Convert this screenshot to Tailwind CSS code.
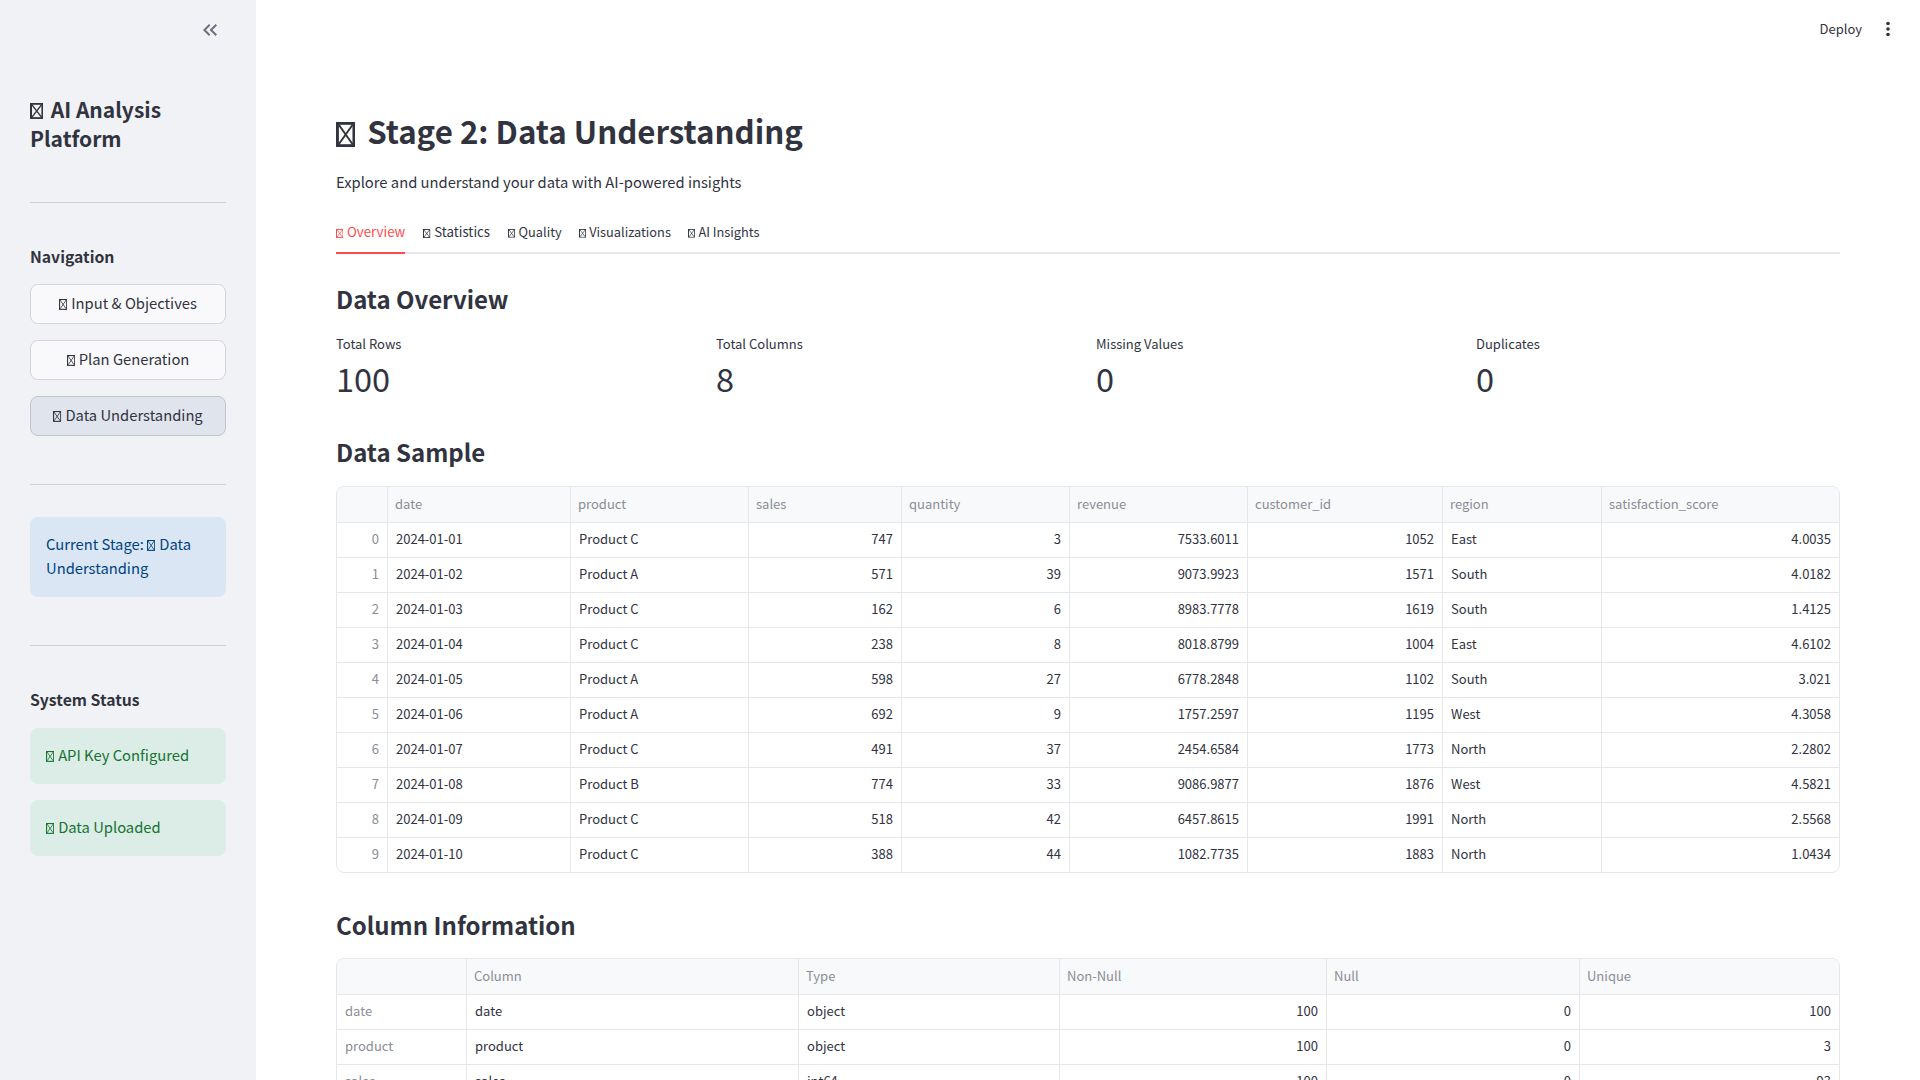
<!DOCTYPE html>
<html lang="en">
<head>
    <meta charset="UTF-8">
    <title>AI Analysis Platform</title>
    <script src="https://cdn.jsdelivr.net/npm/@tailwindcss/browser@4"></script>
</head>
<body class="h-screen overflow-hidden bg-white text-[#31333f] font-['Noto_Sans_CJK_SC','Noto_Sans',sans-serif]">

<!-- missing-glyph box, regular and bold -->
<svg class="absolute w-0 h-0">
    <symbol id="tofu" viewBox="0 0 6 8" preserveAspectRatio="none"><rect x=".4" y=".4" width="5.2" height="7.2" fill="none" stroke="currentColor" stroke-width=".8"/><path d="M.8 .8L5.2 7.2M5.2 .8L.8 7.2" fill="none" stroke="currentColor" stroke-width=".6"/></symbol>
    <symbol id="tofu-bold" viewBox="0 0 6 8" preserveAspectRatio="none"><rect x=".45" y=".45" width="5.1" height="7.1" fill="none" stroke="currentColor" stroke-width=".9"/><path d="M.8 .8L5.2 7.2M5.2 .8L.8 7.2" fill="none" stroke="currentColor" stroke-width=".6"/></symbol>
</svg>

<div class="flex h-screen">

    <!-- Sidebar -->
    <aside class="relative w-64 shrink-0 bg-[#f0f2f6] px-[30px] pt-[95px]">
        <svg class="absolute left-[198px] top-[18px]" width="24" height="24" viewBox="0 0 24 24" fill="#6b6f7c"><path d="M17.59 18L19 16.59 14.42 12 19 7.41 17.59 6l-6 6zM11 18l1.41-1.41L7.83 12l4.58-4.59L11 6l-6 6z"/></svg>
        <h2 class="text-[21px] leading-[29px] font-semibold"><svg class="inline-block w-[.64em] h-[.76em] align-[-.06em] mr-[.12em]"><use href="#tofu-bold"/></svg> AI Analysis Platform</h2>
        <hr class="mt-[49px] border-[#cfd1d6]">
        <h3 class="mt-[42px] text-[15.75px] font-semibold leading-6">Navigation</h3>
        <div class="mt-[15px] flex flex-col gap-4">
            <button class="h-10 pb-[2px] rounded-lg border border-[#d3d5db] bg-[#f9f9fb] text-[14.75px]"><svg class="inline-block w-[.56em] h-[.74em] align-[-.06em] mr-[.04em]"><use href="#tofu"/></svg> Input &amp; Objectives</button>
            <button class="h-10 pb-[2px] rounded-lg border border-[#d3d5db] bg-[#f9f9fb] text-[14.75px]"><svg class="inline-block w-[.56em] h-[.74em] align-[-.06em] mr-[.04em]"><use href="#tofu"/></svg> Plan Generation</button>
            <button class="h-10 pb-[2px] rounded-lg border border-[#c3c6ce] bg-[#e0e5ed] text-[14.75px]"><svg class="inline-block w-[.56em] h-[.74em] align-[-.06em] mr-[.04em]"><use href="#tofu"/></svg> Data Understanding</button>
        </div>
        <hr class="mt-[48px] border-[#cfd1d6]">
        <div class="mt-8 rounded-lg bg-[#dae6f3] px-4 pt-[15px] pb-[17px] text-[14.75px] leading-6 text-[#004280]">Current Stage: <svg class="inline-block w-[.56em] h-[.74em] align-[-.06em] mr-[.04em]"><use href="#tofu"/></svg> Data Understanding</div>
        <hr class="mt-[48px] border-[#cfd1d6]">
        <h3 class="mt-[42px] text-[15.75px] font-semibold leading-6">System Status</h3>
        <div class="mt-[16px] flex flex-col gap-4">
            <div class="h-14 pb-[2px] flex items-center rounded-lg bg-[#dbede6] px-4 text-[14.75px] text-[#177233]"><span><svg class="inline-block w-[.56em] h-[.74em] align-[-.06em] mr-[.04em]"><use href="#tofu"/></svg> API Key Configured</span></div>
            <div class="h-14 pb-[2px] flex items-center rounded-lg bg-[#dbede6] px-4 text-[14.75px] text-[#177233]"><span><svg class="inline-block w-[.56em] h-[.74em] align-[-.06em] mr-[.04em]"><use href="#tofu"/></svg> Data Uploaded</span></div>
        </div>
    </aside>

    <!-- Main -->
    <main class="relative flex-1 px-20 pt-[107px] overflow-hidden">
        <h1 class="text-[31.25px] leading-[48px] font-semibold"><svg class="inline-block w-[.62em] h-[.8em] align-[-.08em] mr-[.15em]"><use href="#tofu-bold"/></svg> Stage 2: Data Understanding</h1>
        <p class="mt-[15px] text-[14.75px] leading-6">Explore and understand your data with AI-powered insights</p>

        <div class="mt-[21px] flex gap-[17px] border-b-2 border-[#e6e7eb] text-[12.8px] h-[39px]">
            <span class="h-[39px] mr-px text-[13.3px] border-b-2 border-[#ff4b4b] text-[#ff4b4b] leading-[34px]"><svg class="inline-block w-[.56em] h-[.68em] align-[-.04em] mr-[.04em]"><use href="#tofu"/></svg> Overview</span>
            <span class="mr-px text-[13.3px] leading-[34px]"><svg class="inline-block w-[.56em] h-[.68em] align-[-.04em] mr-[.04em]"><use href="#tofu"/></svg> Statistics</span>
            <span class="leading-[34px]"><svg class="inline-block w-[.56em] h-[.68em] align-[-.04em] mr-[.04em]"><use href="#tofu"/></svg> Quality</span>
            <span class="leading-[34px]"><svg class="inline-block w-[.56em] h-[.68em] align-[-.04em] mr-[.04em]"><use href="#tofu"/></svg> Visualizations</span>
            <span class="leading-[34px]"><svg class="inline-block w-[.56em] h-[.68em] align-[-.04em] mr-[.04em]"><use href="#tofu"/></svg> AI Insights</span>
        </div>

        <h3 class="mt-[27px] text-[24px] leading-9 font-semibold">Data Overview</h3>
        <div class="mt-[17px] grid grid-cols-4 gap-4">
            <div><div class="text-[13px] leading-5">Total Rows</div><div class="text-[32.5px] leading-[48px]">100</div></div>
            <div><div class="text-[13px] leading-5">Total Columns</div><div class="text-[32.5px] leading-[48px]">8</div></div>
            <div><div class="text-[13px] leading-5">Missing Values</div><div class="text-[32.5px] leading-[48px]">0</div></div>
            <div><div class="text-[13px] leading-5">Duplicates</div><div class="text-[32.5px] leading-[48px]">0</div></div>
        </div>

        <h3 class="mt-[32px] text-[24px] leading-9 font-semibold">Data Sample</h3>
        <div id="sample" class="mt-[16px] rounded-lg border border-[#e6e7eb] overflow-hidden"></div>

        <h3 class="mt-[34px] text-[24px] leading-9 font-semibold">Column Information</h3>
        <div id="columns" class="mt-[15px] rounded-lg border border-[#e6e7eb] overflow-hidden"></div>
    </main>

    <!-- Toolbar -->
    <div class="absolute top-0 right-0 h-[58px] flex items-center text-[13px]">
        <span class="mr-[22px]">Deploy</span>
        <svg class="mr-[28px]" width="8" height="16" viewBox="0 0 8 16" fill="#31333f"><circle cx="4" cy="2.5" r="1.8"/><circle cx="4" cy="8" r="1.8"/><circle cx="4" cy="13.5" r="1.8"/></svg>
    </div>
</div>

<script>
    // rows: first cell is the grey index, the rest are data cells
    const sampleWidths = [51, 183, 178, 153, 168, 178, 195, 159, 237];
    const sampleAlign = ['r', 'l', 'l', 'r', 'r', 'r', 'r', 'l', 'r'];
    const sampleHead = ['', 'date', 'product', 'sales', 'quantity', 'revenue', 'customer_id', 'region', 'satisfaction_score'];
    const sampleRows = [
        ['0', '2024-01-01', 'Product C', '747', '3', '7533.6011', '1052', 'East', '4.0035'],
        ['1', '2024-01-02', 'Product A', '571', '39', '9073.9923', '1571', 'South', '4.0182'],
        ['2', '2024-01-03', 'Product C', '162', '6', '8983.7778', '1619', 'South', '1.4125'],
        ['3', '2024-01-04', 'Product C', '238', '8', '8018.8799', '1004', 'East', '4.6102'],
        ['4', '2024-01-05', 'Product A', '598', '27', '6778.2848', '1102', 'South', '3.021'],
        ['5', '2024-01-06', 'Product A', '692', '9', '1757.2597', '1195', 'West', '4.3058'],
        ['6', '2024-01-07', 'Product C', '491', '37', '2454.6584', '1773', 'North', '2.2802'],
        ['7', '2024-01-08', 'Product B', '774', '33', '9086.9877', '1876', 'West', '4.5821'],
        ['8', '2024-01-09', 'Product C', '518', '42', '6457.8615', '1991', 'North', '2.5568'],
        ['9', '2024-01-10', 'Product C', '388', '44', '1082.7735', '1883', 'North', '1.0434'],
    ];
    const columnWidths = [130, 332, 261, 267, 253, 259];
    const columnAlign = ['l', 'l', 'l', 'r', 'r', 'r'];
    const columnHead = ['', 'Column', 'Type', 'Non-Null', 'Null', 'Unique'];
    const columnRows = [
        ['date', 'date', 'object', '100', '0', '100'],
        ['product', 'product', 'object', '100', '0', '3'],
        ['sales', 'sales', 'int64', '100', '0', '93'],
    ];

    function renderTable(el, widths, align, head, rows) {
        const headCells = head.map((h, i) =>
            `<div class="shrink-0 h-full flex items-center pl-[7px] pr-2 pb-[2px] text-[13px] text-[#8b8d96] bg-[#f8f9fb] border-r border-[#e6e7eb] last:border-r-0" style="width:${widths[i]}px">${h}</div>`
        ).join('');
        let html = `<div class="flex h-[36px] border-b border-[#e6e7eb]">${headCells}</div>`;
        rows.forEach(row => {
            const cells = row.map((c, i) => {
                const tone = i === 0 ? 'text-[#8b8d96]' : 'text-[#31333f]';
                const side = align[i] === 'r' ? 'justify-end' : 'justify-start';
                return `<div class="shrink-0 h-full flex items-center px-2 pb-[2px] text-[13px] border-r border-[#e6e7eb] last:border-r-0 ${tone} ${side}" style="width:${widths[i]}px">${c}</div>`;
            }).join('');
            html += `<div class="flex h-[35px] last:h-[34px] border-b border-[#e6e7eb] last:border-b-0">${cells}</div>`;
        });
        el.innerHTML = html;
    }

    renderTable(document.getElementById('sample'), sampleWidths, sampleAlign, sampleHead, sampleRows);
    renderTable(document.getElementById('columns'), columnWidths, columnAlign, columnHead, columnRows);
</script>
</body>
</html>
